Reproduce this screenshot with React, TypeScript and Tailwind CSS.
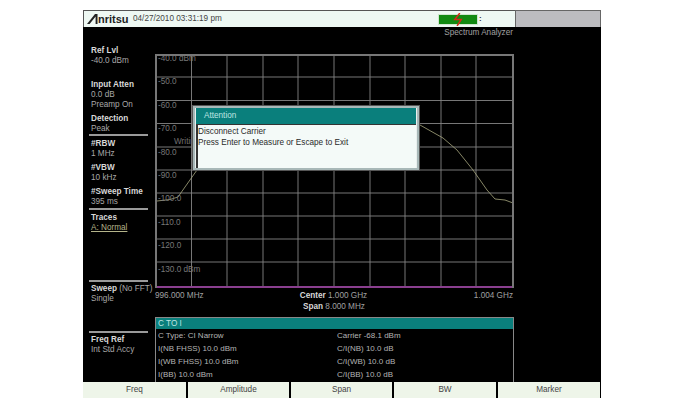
import React from 'react'

const gridY = [21, 44.5, 67.5, 91, 114, 137, 160, 183, 206]
const gridX = [34.5, 70, 106, 141, 177, 213, 248, 284, 319]
const dbLabels = ['-40.0 dBm', '-50.0', '-60.0', '-70.0', '-80.0', '-90.0', '-100.0', '-110.0', '-120.0', '-130.0 dBm']
const softKeys = [
  { label: 'Freq', w: 'w-[103px]' },
  { label: 'Amplitude', w: 'w-[101px]' },
  { label: 'Span', w: 'w-[101px]' },
  { label: 'BW', w: 'w-[102px]' },
  { label: 'Marker', w: 'w-[102px]' },
]
const tableRows = [
  ['C Type: CI Narrow', 'Carrier -68.1 dBm'],
  ['I(NB FHSS) 10.0 dBm', 'C/I(NB) 10.0 dB'],
  ['I(WB FHSS) 10.0 dBm', 'C/I(WB) 10.0 dB'],
  ['I(BB) 10.0 dBm', 'C/I(BB) 10.0 dB'],
]

function Info({ title, value, className = '' }: { title: string; value?: string; className?: string }) {
  return (
    <div className={`pl-2 ${className}`}>
      <div className="font-bold text-[#d8d8d8]">{title}</div>
      {value && <div className="text-[#a8a8a8]">{value}</div>}
    </div>
  )
}

function Rule({ className = '' }: { className?: string }) {
  return <div className={`ml-[6px] h-[2px] w-[59px] bg-[#9a9a9a] ${className}`} />
}

export default function App() {
  return (
    <main className="h-[408px] w-[689px] overflow-hidden bg-white pl-[83px] pt-[10px] font-['Liberation_Sans',Arial,sans-serif] text-[8.2px] leading-[10px]">
      <div className="w-[518px] bg-black">
        {/* Top bar */}
        <div className="flex h-[17px]">
          <div className="flex w-[432px] items-center border-l border-t border-[#555] bg-[#eef8f3] pl-[3px]">
            <svg viewBox="0 0 12 10" className="h-[10px] w-[12px] text-[#222]">
              <path d="M0 10 L8 0 H10.5 V10 H8.6 V2.6 L2.6 10 Z" fill="currentColor" />
            </svg>
            <span className="-ml-px w-[30px] text-[11px] font-bold text-[#222]">nritsu</span>
            <span className="ml-[5px] w-[88px] whitespace-nowrap text-[#444]">04/27/2010 03:31:19 pm</span>
            <div className="relative ml-[217px] h-[11px] w-[40px] border border-[#cfe6cf] bg-[#128a12]">
              <svg viewBox="0 0 10 14" className="absolute left-[14px] top-[-2px] h-[13px] w-[10px]">
                <path d="M7 0 L1.5 7 H8.5 L4 14" fill="none" stroke="#d42a1a" strokeWidth="1.6" />
              </svg>
            </div>
            <span className="ml-px text-[8px] font-bold leading-[8px] text-[#333]">:</span>
          </div>
          <div className="flex-1 border-l border-t border-r border-[#666] bg-[#bcbcc0]" />
        </div>

        <div className="flex">
          {/* Left readouts */}
          <aside className="flex h-[355px] w-[72px] shrink-0 flex-col whitespace-nowrap pt-[19px]">
            <Info title="Ref Lvl" value="-40.0 dBm" />
            <Info title="Input Atten" value="0.0 dB" className="mt-[14px]" />
            <div className="pl-2 text-[#a8a8a8]">Preamp On</div>
            <Info title="Detection" value="Peak" className="mt-[4px]" />
            <Rule />
            <Info title="#RBW" value="1 MHz" className="mt-[3px]" />
            <Info title="#VBW" value="10 kHz" className="mt-[4px]" />
            <Info title="#Sweep Time" value="395 ms" className="mt-[4px]" />
            <Rule className="mt-px" />
            <div className="mt-[3px] pl-2">
              <div className="font-bold text-[#d8d8d8]">Traces</div>
              <div className="text-[#b4b48a] underline">A: Normal</div>
            </div>
            <Rule className="mt-[47px]" />
            <div className="mt-[2px] pl-2">
              <div className="text-[#a8a8a8]">
                <span className="font-bold text-[#d8d8d8]">Sweep</span> (No FFT)
              </div>
              <div className="text-[#a8a8a8]">Single</div>
            </div>
            <Rule className="mt-[27px]" />
            <Info title="Freq Ref" value="Int Std Accy" className="mt-[2px]" />
          </aside>

          {/* Center */}
          <section className="flex w-[359px] shrink-0 flex-col">
            <div className="h-[27px] pr-px pt-px text-right text-[#a0a0a0]">Spectrum Analyzer</div>

            <div className="relative h-[234px] w-[359px] border-2 border-b-0 border-[#777]">
              <svg viewBox="0 0 355 232" className="absolute left-0 top-0 h-[232px] w-[355px]">
                {gridY.map((y) => (
                  <line key={y} x1="0" x2="355" y1={y} y2={y} stroke="#858585" strokeWidth="0.9" />
                ))}
                {gridX.map((x) => (
                  <line key={x} x1={x} x2={x} y1="0" y2="232" stroke="#858585" strokeWidth="0.9" />
                ))}
                <polyline
                  points="0,145 13,143.5 21,141 28,131 40,114"
                  fill="none"
                  stroke="#a8a880"
                  strokeWidth="0.8"
                />
                <polyline
                  points="263,69 286,82 300,94 316,114 330,134 338,143 348,144 356,147"
                  fill="none"
                  stroke="#a8a880"
                  strokeWidth="0.8"
                />
                <line x1="0" x2="355" y1="231" y2="231" stroke="#8a3f8f" strokeWidth="2" />
              </svg>

              <div className="absolute left-[1px] top-[-2px] flex flex-col text-[#787878]">
                {dbLabels.map((t) => (
                  <div key={t} className="h-[23.4px] whitespace-nowrap">
                    {t}
                  </div>
                ))}
              </div>
              <span className="absolute left-[17px] top-[81px] text-[#6f6f6f]">Writing</span>

              {/* Attention dialog */}
              <div className="absolute left-[36px] top-[50px] h-[64px] w-[226px] border-2 border-[#a8b8b8] bg-[#e9efee] shadow-[0_0_0_1px_#555]">
                <div className="mx-px flex h-[16px] items-center bg-[#0a7f7c] pl-[8px] text-[#bfe5e2]">Attention</div>
                <div className="ml-px h-[44px] w-[220px] border-l-2 border-t border-[#333] bg-[#f4faf8] text-[#2a2a2a]">
                  <div className="pt-px leading-[11px]">Disconnect Carrier</div>
                  <div className="leading-[11px]">Press Enter to Measure or Escape to Exit</div>
                </div>
              </div>
            </div>

            {/* Frequency axis */}
            <div className="flex h-[13px] items-end justify-between text-[#a0a0a0]">
              <span className="w-[110px]">996.000 MHz</span>
              <span className="ml-[-2px]">
                <b className="text-[#d8d8d8]">Center</b> 1.000 GHz
              </span>
              <span className="w-[110px] pr-px text-right">1.004 GHz</span>
            </div>
            <div className="mt-[1px] text-center text-[#a0a0a0]">
              <span className="ml-[-1px]">
                <b className="text-[#d8d8d8]">Span</b> 8.000 MHz
              </span>
            </div>

            {/* C TO I table */}
            <div className="mt-[5px] flex h-[65px] flex-col border-x border-t border-[#888]">
              <div className="flex h-[11px] items-center bg-[#0a7f7c] pl-[2px] text-[#bfe5e2]">C TO I</div>
              <div className="flex flex-col text-[8px] text-[#b4b4b4]">
                {tableRows.map(([a, b]) => (
                  <div key={a} className="flex h-[13px] items-center pl-[2px]">
                    <span className="w-[179px]">{a}</span>
                    <span>{b}</span>
                  </div>
                ))}
              </div>
            </div>
          </section>

          <div className="flex-1" />
        </div>

        {/* Soft keys */}
        <div className="flex gap-[2px] bg-black">
          {softKeys.map((k) => (
            <div key={k.label} className={`flex h-[16px] ${k.w} items-center justify-center bg-[#eef5e9] text-[#444]`}>
              {k.label}
            </div>
          ))}
        </div>
      </div>
    </main>
  )
}
